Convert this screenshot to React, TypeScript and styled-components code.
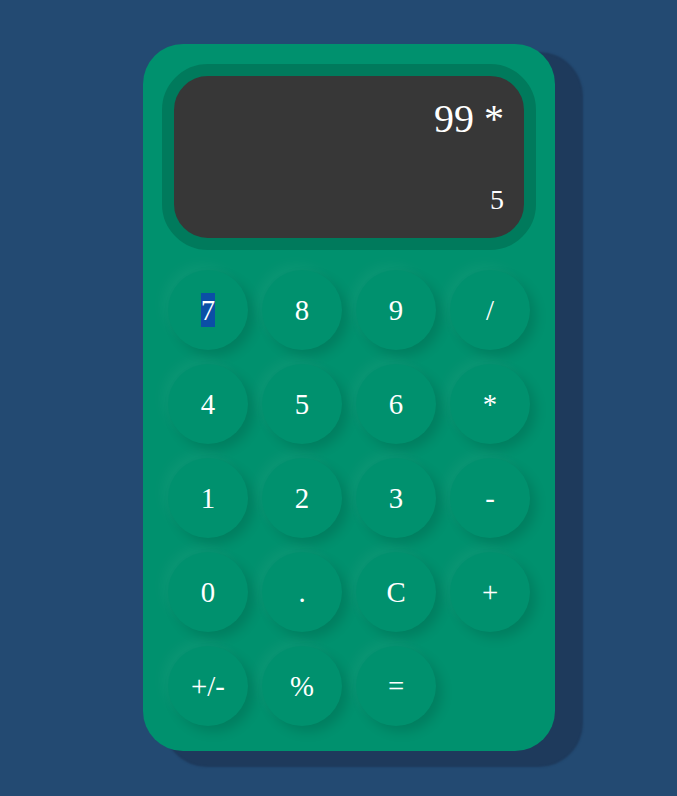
import React from "react";
import styled, { createGlobalStyle } from "styled-components";

const Global = createGlobalStyle`
  html, body {
    margin: 0;
    padding: 0;
    background: #234a72;
    font-family: "Liberation Serif", "Times New Roman", serif;
  }
`;

const Page = styled.div`
  min-height: 796px;
  padding: 44px 0 0 143px;
  box-sizing: border-box;
`;

const Calculator = styled.div`
  width: 412px;
  box-sizing: border-box;
  padding: 20px 19px 25px;
  background: #00916e;
  border-radius: 40px;
  box-shadow: 24px 12px 2px 4px #1e3a5c;
  display: flex;
  flex-direction: column;
  gap: 20px;
`;

const Screen = styled.div`
  height: 186px;
  box-sizing: border-box;
  border: 12px solid #007a5c;
  border-radius: 46px;
  background: #373737;
  color: #fff;
  display: flex;
  flex-direction: column;
  justify-content: space-between;
  align-items: flex-end;
  padding: 20px 20px 22px;
`;

const Previous = styled.div`
  font-size: 40px;
  line-height: 46px;
`;

const Current = styled.div`
  font-size: 28px;
  line-height: 32px;
`;

const Keys = styled.div`
  display: grid;
  grid-template-columns: repeat(4, 80px);
  gap: 14px;
  padding: 0 6px;
`;

const Key = styled.button`
  width: 80px;
  height: 80px;
  border: none;
  border-radius: 50%;
  background: #00916e;
  color: #fff;
  font-family: "Liberation Serif", "Times New Roman", serif;
  font-size: 28.8px;
  line-height: 34px;
  padding: 0;
  display: flex;
  align-items: center;
  justify-content: center;
  box-shadow: 6px 6px 12px rgba(0, 0, 0, 0.13),
    -6px -6px 12px rgba(255, 255, 255, 0.04);
  cursor: pointer;
`;

const Selected = styled.span`
  display: inline-block;
  background: #0b4fa6;
  line-height: 34px;
`;

const keys = [
  "7", "8", "9", "/",
  "4", "5", "6", "*",
  "1", "2", "3", "-",
  "0", ".", "C", "+",
  "+/-", "%", "=",
];

export default function App() {
  return (
    <>
      <Global />
      <Page>
        <Calculator>
          <Screen>
            <Previous>99 *</Previous>
            <Current>5</Current>
          </Screen>
          <Keys>
            {keys.map((k) => (
              <Key key={k}>{k === "7" ? <Selected>7</Selected> : k}</Key>
            ))}
          </Keys>
        </Calculator>
      </Page>
    </>
  );
}
